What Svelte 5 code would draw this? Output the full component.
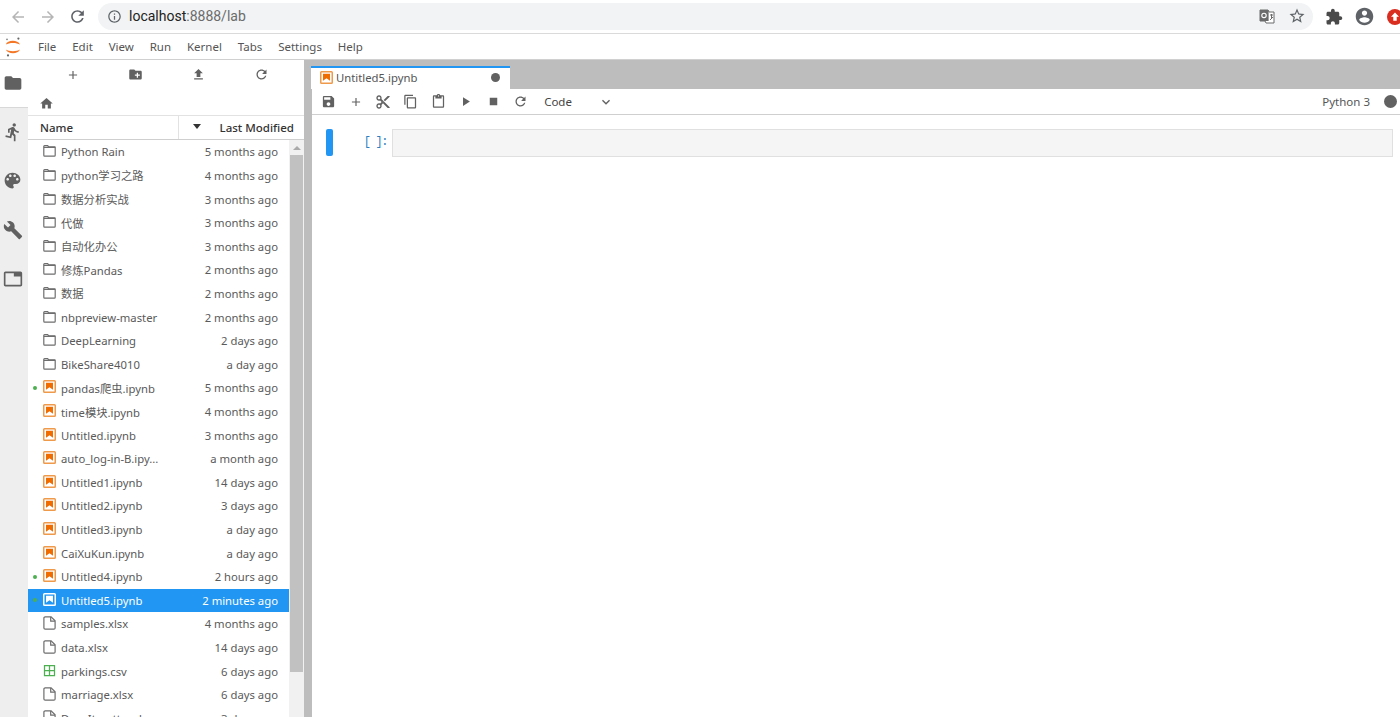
<script>
  const P = {
    back: 'M20 11H7.83l5.59-5.59L12 4l-8 8 8 8 1.41-1.41L7.83 13H20v-2z',
    refresh: 'M17.65 6.35C16.2 4.9 14.21 4 12 4c-4.42 0-7.99 3.58-7.99 8s3.57 8 7.99 8c3.73 0 6.84-2.55 7.73-6h-2.08c-.82 2.33-3.04 4-5.65 4-3.31 0-6-2.69-6-6s2.69-6 6-6c1.66 0 3.14.69 4.22 1.78L13 11h7V4l-2.35 2.35z',
    info: 'M11 17h2v-6h-2v6zm1-15C6.48 2 2 6.48 2 12s4.48 10 10 10 10-4.48 10-10S17.52 2 12 2zm0 18c-4.41 0-8-3.59-8-8s3.59-8 8-8 8 3.59 8 8-3.59 8-8 8zM11 9h2V7h-2v2z',
    star: 'M22 9.24l-7.19-.62L12 2 9.19 8.63 2 9.24l5.46 4.73L5.82 21 12 17.27 18.18 21l-1.63-7.03L22 9.24zM12 15.4l-3.76 2.27 1-4.28-3.32-2.88 4.38-.38L12 6.1l1.71 4.04 4.38.38-3.32 2.88 1 4.28L12 15.4z',
    ext: 'M20.5 11H19V7c0-1.1-.9-2-2-2h-4V3.5C13 2.12 11.88 1 10.5 1S8 2.12 8 3.5V5H4c-1.1 0-1.99.9-1.99 2v3.8H3.5c1.49 0 2.7 1.21 2.7 2.7s-1.21 2.7-2.7 2.7H2V20c0 1.1.9 2 2 2h3.8v-1.5c0-1.49 1.21-2.7 2.7-2.7 1.49 0 2.7 1.21 2.7 2.7V22H17c1.1 0 2-.9 2-2v-4h1.5c1.38 0 2.5-1.12 2.5-2.5S21.88 11 20.5 11z',
    account: 'M12 2C6.48 2 2 6.48 2 12s4.48 10 10 10 10-4.48 10-10S17.52 2 12 2zm0 3c1.66 0 3 1.34 3 3s-1.34 3-3 3-3-1.34-3-3 1.34-3 3-3zm0 14.2c-2.5 0-4.71-1.28-6-3.22.03-1.99 4-3.08 6-3.08 1.99 0 5.97 1.09 6 3.08-1.29 1.94-3.5 3.22-6 3.22z',
    folder: 'M10 4H4c-1.1 0-1.99.9-1.99 2L2 18c0 1.1.9 2 2 2h16c1.1 0 2-.9 2-2V8c0-1.1-.9-2-2-2h-8l-2-2z',
    newfolder: 'M20 6h-8l-2-2H4c-1.11 0-1.99.89-1.99 2L2 18c0 1.11.89 2 2 2h16c1.11 0 2-.89 2-2V8c0-1.11-.89-2-2-2zm-1 8h-3v3h-2v-3h-3v-2h3V9h2v3h3v2z',
    upload: 'M9 16h6v-6h4l-7-7-7 7h4zm-4 2h14v2H5z',
    home: 'M10 20v-6h4v6h5v-8h3L12 3 2 12h3v8z',
    run: 'M13.49 5.48c1.1 0 2-.9 2-2s-.9-2-2-2-2 .9-2 2 .9 2 2 2zm-3.6 13.9l1-4.4 2.1 2v6h2v-7.5l-2.1-2 .6-3c1.3 1.5 3.3 2.5 5.5 2.5v-2c-1.9 0-3.5-1-4.3-2.4l-1-1.6c-.4-.6-1-1-1.7-1-.3 0-.5.1-.8.1l-5.2 2.2v4.7h2v-3.4l1.8-.7-1.6 8.1-4.9-1-.4 2 7 1.4z',
    palette: 'M12 3c-4.97 0-9 4.03-9 9s4.03 9 9 9c.83 0 1.5-.67 1.5-1.5 0-.39-.15-.74-.39-1.01-.23-.26-.38-.61-.38-.99 0-.83.67-1.5 1.5-1.5H16c2.76 0 5-2.24 5-5 0-4.42-4.03-8-9-8zm-5.5 9c-.83 0-1.5-.67-1.5-1.5S5.67 9 6.5 9 8 9.67 8 10.5 7.33 12 6.5 12zm3-4C8.67 8 8 7.33 8 6.5S8.67 5 9.5 5s1.5.67 1.5 1.5S10.33 8 9.5 8zm5 0c-.83 0-1.5-.67-1.5-1.5S13.67 5 14.5 5s1.5.67 1.5 1.5S15.33 8 14.5 8zm3 4c-.83 0-1.5-.67-1.5-1.5S16.67 9 17.5 9s1.5.67 1.5 1.5-.67 1.5-1.5 1.5z',
    build: 'M22.7 19l-9.1-9.1c.9-2.3.4-5-1.5-6.9-2-2-5-2.4-7.4-1.3L9 6 6 9 1.6 4.7C.4 7.1.9 10.1 2.9 12.1c1.9 1.9 4.6 2.4 6.9 1.5l9.1 9.1c.4.4 1 .4 1.4 0l2.3-2.3c.5-.4.5-1.1.1-1.4z',
    tab: 'M21 3H3c-1.1 0-2 .9-2 2v14c0 1.1.9 2 2 2h18c1.1 0 2-.9 2-2V5c0-1.1-.9-2-2-2zm0 16H3V5h10v4h8v10z',
    save: 'M17 3H5c-1.11 0-2 .9-2 2v14c0 1.1.89 2 2 2h14c1.1 0 2-.9 2-2V7l-4-4zm-5 16c-1.66 0-3-1.34-3-3s1.34-3 3-3 3 1.34 3 3-1.34 3-3 3zm3-10H5V5h10v4z',
    add: 'M19 13h-6v6h-2v-6H5v-2h6V5h2v6h6v2z',
    cut: 'M9.64 7.64c.23-.5.36-1.05.36-1.64 0-2.21-1.79-4-4-4S2 3.79 2 6s1.79 4 4 4c.59 0 1.14-.13 1.64-.36L10 12l-2.36 2.36C7.14 14.13 6.59 14 6 14c-2.21 0-4 1.79-4 4s1.79 4 4 4 4-1.79 4-4c0-.59-.13-1.14-.36-1.64L12 14l7 7h3v-1L9.64 7.64zM6 8c-1.1 0-2-.89-2-2s.9-2 2-2 2 .89 2 2-.9 2-2 2zm0 12c-1.1 0-2-.89-2-2s.9-2 2-2 2 .89 2 2-.9 2-2 2zm6-7.5c-.28 0-.5-.22-.5-.5s.22-.5.5-.5.5.22.5.5-.22.5-.5.5zM19 3l-6 6 2 2 7-7V3z',
    copy: 'M16 1H4c-1.1 0-2 .9-2 2v14h2V3h12V1zm3 4H8c-1.1 0-2 .9-2 2v14c0 1.1.9 2 2 2h11c1.1 0 2-.9 2-2V7c0-1.1-.9-2-2-2zm0 16H8V7h11v14z',
    paste: 'M19 2h-4.18C14.4.84 13.3 0 12 0c-1.3 0-2.4.84-2.82 2H5c-1.1 0-2 .9-2 2v16c0 1.1.9 2 2 2h14c1.1 0 2-.9 2-2V4c0-1.1-.9-2-2-2zm-7 0c.55 0 1 .45 1 1s-.45 1-1 1-1-.45-1-1 .45-1 1-1zm7 18H5V4h2v3h10V4h2v16z',
    play: 'M8 5v14l11-7z',
    stop: 'M6 6h12v12H6z',
    chevron: 'M7.41 8.59L12 13.17l4.59-4.58L18 10l-6 6-6-6z',
    grid: 'M3 3h18v18H3zm2 2v6h6V5zm8 0v6h6V5zm-8 8v6h6v-6zm8 0v6h6v-6z'
  };
  const menus = ['File', 'Edit', 'View', 'Run', 'Kernel', 'Tabs', 'Settings', 'Help'];
  const rows = [
    ['dir', 'Python Rain', '5 months ago'],
    ['dir', 'python学习之路', '4 months ago'],
    ['dir', '数据分析实战', '3 months ago'],
    ['dir', '代做', '3 months ago'],
    ['dir', '自动化办公', '3 months ago'],
    ['dir', '修炼Pandas', '2 months ago'],
    ['dir', '数据', '2 months ago'],
    ['dir', 'nbpreview-master', '2 months ago'],
    ['dir', 'DeepLearning', '2 days ago'],
    ['dir', 'BikeShare4010', 'a day ago'],
    ['nb', 'pandas爬虫.ipynb', '5 months ago', 'run'],
    ['nb', 'time模块.ipynb', '4 months ago'],
    ['nb', 'Untitled.ipynb', '3 months ago'],
    ['nb', 'auto_log-in-B.ipy...', 'a month ago'],
    ['nb', 'Untitled1.ipynb', '14 days ago'],
    ['nb', 'Untitled2.ipynb', '3 days ago'],
    ['nb', 'Untitled3.ipynb', 'a day ago'],
    ['nb', 'CaiXuKun.ipynb', 'a day ago'],
    ['nb', 'Untitled4.ipynb', '2 hours ago', 'run'],
    ['nb', 'Untitled5.ipynb', '2 minutes ago', 'run sel'],
    ['file', 'samples.xlsx', '4 months ago'],
    ['file', 'data.xlsx', '14 days ago'],
    ['csv', 'parkings.csv', '6 days ago'],
    ['file', 'marriage.xlsx', '6 days ago'],
    ['file', 'DoesItmatter.xlsx', '3 days ago']
  ];
</script>

{#snippet icon(name, size, cls = '')}
  <svg class={'ic ' + cls} width={size} height={size} viewBox="0 0 24 24"><path d={P[name]} fill-rule="evenodd" /></svg>
{/snippet}

{#snippet nbIcon(cls = '')}
  <svg class={'ic nbi ' + cls} width="13" height="13" viewBox="0 0 13 13">
    <rect class="nbframe" x=".75" y=".75" width="11.5" height="11.5" rx=".8" />
    <path class="nbmark" d="M3 2.8h7v6.9L6.5 7.3 3 9.7z" />
  </svg>
{/snippet}

{#snippet folderLine()}
  <svg class="ic" width="13" height="13" viewBox="0 0 13 13">
    <path class="fline" d="M.8 2.6c0-.5.3-.9.8-.9h3.1l.9 1.2h6.1c.3 0 .5.2.5.5v7.9c0 .5-.3.9-.8.9H1.6c-.5 0-.8-.4-.8-.9z" />
    <path class="fline" d="M.8 3.4h11.4" />
  </svg>
{/snippet}

{#snippet fileLine()}
  <svg class="ic" width="13" height="14" viewBox="0 0 13 14">
    <path class="fline" d="M2.2.9h5.9l4 3.8v7.2c0 .7-.5 1.2-1.2 1.2H2.2c-.7 0-1.3-.5-1.3-1.2V2.1C.9 1.4 1.5.9 2.2.9z" />
    <path class="fline" d="M7.7 1v4.1h4.3" />
  </svg>
{/snippet}

<div class="page">
  <header class="chrome">
    <div class="navs">
      <span class="nav n1">{@render icon('back', 18, 'faint')}</span>
      <span class="nav n2 flip">{@render icon('back', 18, 'faint')}</span>
      <span class="nav n3">{@render icon('refresh', 19, 'dark')}</span>
    </div>
    <div class="omni">
      {@render icon('info', 15, 'dark')}
      <span class="url"><b>localhost</b>:8888/lab</span>
      <span class="omni-right">
        <svg class="translate" width="16" height="15" viewBox="0 0 16 15">
          <path d="M1 1h8l1 2h5v11H7l-1-2H1z" fill="#fff" stroke="#6b6b6b" />
          <path d="M1 1h8.6v11H1z" fill="#6b6b6b" />
          <circle cx="5" cy="6.4" r="2.2" fill="none" stroke="#fff" stroke-width="1.1" />
          <path d="M11 6h3M12.5 5v5M11 11l3-3" stroke="#6b6b6b" fill="none" />
        </svg>
        {@render icon('star', 18, 'dark')}
      </span>
    </div>
    <div class="ext">
      {@render icon('ext', 18, 'darker')}
      {@render icon('account', 21, 'dark')}
      <svg class="upd" width="16" height="16" viewBox="0 0 16 16">
        <circle cx="8" cy="8" r="8" fill="#d92d20" />
        <path d="M8 3.5l4 4.2H9.7v4H6.3v-4H4z" fill="#fff" />
      </svg>
    </div>
  </header>

  <nav class="menubar">
    <svg class="logo" width="16" height="20" viewBox="0 0 16 20">
      <path d="M.8 7.6C2.4 2.6 13 2.6 15 7.6 12 5.4 4 5.4.8 7.6zM.8 12.6C3 17.6 13 17.6 15 12.6 12 14.8 4 14.8.8 12.6z" fill="#f37726" />
      <circle cx="13.4" cy="1.6" r="1.1" fill="#666" />
      <circle cx="2" cy="2.4" r=".8" fill="#777" />
      <circle cx="3" cy="18.4" r="1.1" fill="#666" />
    </svg>
    {#each menus as m}<span class="menu">{m}</span>{/each}
  </nav>

  <div class="work">
    <aside class="rail">
      <div class="rail-tab on">{@render icon('folder', 20, 'rail-ic')}</div>
      <div class="rail-tab">{@render icon('run', 20, 'rail-ic')}</div>
      <div class="rail-tab">{@render icon('palette', 21, 'rail-ic')}</div>
      <div class="rail-tab">{@render icon('build', 20, 'rail-ic')}</div>
      <div class="rail-tab">{@render icon('tab', 20, 'rail-ic')}</div>
    </aside>

    <section class="browser">
      <div class="ftools">
        <span>{@render icon('add', 14, 'mid')}</span>
        <span>{@render icon('newfolder', 15, 'mid')}</span>
        <span>{@render icon('upload', 15, 'mid')}</span>
        <span>{@render icon('refresh', 15, 'mid')}</span>
      </div>
      <div class="crumbs">{@render icon('home', 15, 'mid')}</div>
      <div class="fhead">
        <span class="hname">Name</span>
        <span class="hmod"><i class="caret"></i><span>Last Modified</span></span>
      </div>
      <div class="flist">
        <ul>
          {#each rows as r}
            <li class={r[3] ?? ''}>
              <span class="dot"></span>
              {#if r[0] === 'dir'}
                <span class="fi">{@render folderLine()}</span>
              {:else if r[0] === 'nb'}
                <span class="fi">{@render nbIcon()}</span>
              {:else if r[0] === 'csv'}
                <span class="fi">{@render icon('grid', 15, 'csvic')}</span>
              {:else}
                <span class="fi">{@render fileLine()}</span>
              {/if}
              <span class="fname">{r[1]}</span>
              <span class="fdate">{r[2]}</span>
            </li>
          {/each}
        </ul>
        <div class="vbar">
          <i class="uparrow"></i>
          <div class="thumb"></div>
        </div>
      </div>
    </section>

    <div class="split"></div>

    <main class="nb">
      <div class="tabbar">
        <div class="tab">
          {@render nbIcon('small')}
          <span class="tabname">Untitled5.ipynb</span>
          <i class="unsaved"></i>
        </div>
      </div>
      <div class="nbtools">
        <span class="t">{@render icon('save', 15, 'mid')}</span>
        <span class="t">{@render icon('add', 14, 'mid')}</span>
        <span class="t">{@render icon('cut', 16, 'mid')}</span>
        <span class="t">{@render icon('copy', 15, 'mid')}</span>
        <span class="t">{@render icon('paste', 15, 'mid')}</span>
        <span class="t">{@render icon('play', 15, 'mid')}</span>
        <span class="t">{@render icon('stop', 15, 'mid')}</span>
        <span class="t">{@render icon('refresh', 15, 'mid')}</span>
        <span class="celltype">Code</span>
        {@render icon('chevron', 16, 'mid')}
        <span class="kernel">Python 3</span>
        <i class="kdot"></i>
      </div>
      <div class="cell">
        <i class="collapser"></i>
        <span class="prompt">[ ]:</span>
        <div class="editor"></div>
      </div>
    </main>
  </div>
</div>

<style>
  :global(body) { margin: 0; overflow: hidden; background: #fff; }
  .page {
    width: 1400px; height: 717px; overflow: hidden; display: flex; flex-direction: column;
    font-family: "Noto Sans", "Noto Sans CJK SC", sans-serif; font-size: 11.3px; color: #555;
  }
  .ic { display: block; flex: none; fill: #616161; }
  :global(.ic.faint) { fill: #b5b5b5; }
  :global(.ic.dark) { fill: #5f6368; }
  :global(.ic.darker) { fill: #4a4a4a; }
  :global(.ic.mid) { fill: #616161; }
  :global(.ic.rail-ic) { fill: #616161; }
  :global(.ic.csvic) { fill: #4caf50; }
  :global(.fline) { fill: none; stroke: #6e6e6e; stroke-width: 1.2; }
  :global(.nbframe) { fill: #fff; stroke: #ef9a4a; stroke-width: 1.5; }
  :global(.nbmark) { fill: #ef6c00; }

  .chrome { height: 33px; display: flex; align-items: center; border-bottom: 1px solid #dadada; flex: none; background: #fff; }
  .navs { display: flex; width: 98px; flex: none; align-items: center; }
  .nav { width: 30px; display: flex; justify-content: center; }
  .n1 { margin-left: 3px; }
  .n3 { margin-left: -1px; }
  .flip { transform: scaleX(-1); }
  .omni {
    flex: none; width: 1215px; height: 27px; border-radius: 14px; background: #f1f3f4; display: flex; align-items: center;
    padding: 0 7px 0 9px; box-sizing: border-box; gap: 7px; margin-bottom: 1px;
  }
  .url { font-family: "Roboto", sans-serif; font-size: 14px; color: #6b6b6b; }
  .url b { font-weight: 400; color: #222; }
  .omni-right { margin-left: auto; display: flex; align-items: center; gap: 13px; }
  .ext { display: flex; align-items: center; gap: 11px; margin-left: 12px; flex: none; }
  .upd { margin-left: 1px; }

  .menubar { height: 25px; flex: none; display: flex; align-items: center; border-bottom: 1px solid #d0d0d0; padding-left: 5px; }
  .logo { margin-right: 9px; }
  .menu { margin: 0 7.95px; font-size: 11.5px; color: #555; }

  .work { flex: 1; min-height: 0; display: flex; }
  .rail { width: 28px; flex: none; background: #eee; display: flex; flex-direction: column; }
  .rail-tab { height: 49px; display: flex; align-items: center; justify-content: center; box-sizing: border-box; padding: 0 3px 2px 0; }
  .rail-tab.on { background: #fff; height: 48px; border-bottom: 1px solid #d8d8d8; }

  .browser { width: 276px; flex: none; display: flex; flex-direction: column; background: #fff; }
  .ftools { height: 29px; flex: none; display: grid; grid-template-columns: repeat(4, 63px); padding-left: 13px; align-items: center; }
  .ftools span { display: flex; justify-content: center; }
  .crumbs { height: 26px; flex: none; display: flex; align-items: center; padding: 2px 0 0 11px; box-sizing: border-box; }
  .fhead { height: 23px; flex: none; display: flex; border-top: 1px solid #e2e2e2; border-bottom: 1px solid #cfcfcf; align-items: center; font-weight: 500; color: #333; font-size: 11.5px; }
  .hname { width: 151px; height: 100%; padding-left: 12px; box-sizing: border-box; border-right: 1px solid #e2e2e2; display: flex; align-items: center; }
  .hmod { flex: 1; display: flex; align-items: center; justify-content: space-between; padding: 0 10px 0 14px; }
  .caret { width: 0; height: 0; border: 4px solid transparent; border-top: 5px solid #333; border-bottom: 0; margin-bottom: 3px; }

  .flist { flex: 1; min-height: 0; display: flex; overflow: hidden; }
  ul { list-style: none; margin: 0; padding: 0; flex: 1; min-width: 0; }
  li { height: 23.62px; display: flex; align-items: center; box-sizing: border-box; color: #5a5a5a; }
  .dot { width: 4px; height: 4px; border-radius: 50%; margin: 0 5px; flex: none; }
  li.run .dot { background: #4caf50; }
  .fi { width: 14px; display: flex; justify-content: center; margin-right: 5px; flex: none; padding-bottom: 2px; }
  .fname { flex: 1; min-width: 0; white-space: nowrap; }
  .fdate { padding-right: 11px; white-space: nowrap; }
  li.sel { background: #2196f3; color: #fff; }
  li.sel :global(.nbframe) { stroke: #fff; fill: #2196f3; }
  li.sel :global(.nbmark) { fill: #fff; }

  .vbar { width: 15px; flex: none; background: #f1f1f1; display: flex; flex-direction: column; align-items: center; }
  .uparrow { width: 0; height: 0; border: 4px solid transparent; border-bottom: 4px solid #aaa; border-top: 0; margin: 6px 0 5px; }
  .thumb { width: 13px; flex: 1; margin-bottom: 45px; background: #c1c1c1; }

  .split { width: 8px; flex: none; background: #bdbdbd; }

  .nb { flex: 1; min-width: 0; display: flex; flex-direction: column; background: #fff; }
  .tabbar { height: 29px; flex: none; background: #bdbdbd; display: flex; align-items: flex-end; }
  .tab { width: 199px; height: 23px; margin-left: -1px; box-sizing: border-box; background: #fff; border-top: 2px solid #2196f3; display: flex; align-items: center; padding: 0 10px 3px 9px; gap: 3px; }
  .tabname { flex: 1; font-size: 11.3px; color: #555; }
  .unsaved { width: 9px; height: 9px; border-radius: 50%; background: #616161; }

  .nbtools { height: 25px; flex: none; display: flex; align-items: center; border-bottom: 1px solid #cfcfcf; padding: 0 3px 0 3px; }
  .t { width: 27.4px; display: flex; justify-content: center; }
  .celltype { margin-left: 10px; width: 54px; font-size: 11.5px; color: #444; }
  .kernel { margin-left: auto; font-size: 11.5px; color: #555; margin-right: 14px; }
  .kdot { width: 13px; height: 13px; border-radius: 50%; background: #616161; }

  .cell { display: flex; padding: 14px 7px 0 14px; align-items: flex-start; }
  .collapser { width: 7px; height: 27px; background: #2196f3; border-radius: 2px; flex: none; }
  .prompt { width: 54px; text-align: right; font-family: "Liberation Mono", monospace; font-size: 12px; letter-spacing: -1.4px; color: #307fc1; line-height: 26px; padding-right: 5px; flex: none; }
  .editor { flex: 1; height: 26px; background: #f5f5f5; border: 1px solid #e0e0e0; }
</style>
